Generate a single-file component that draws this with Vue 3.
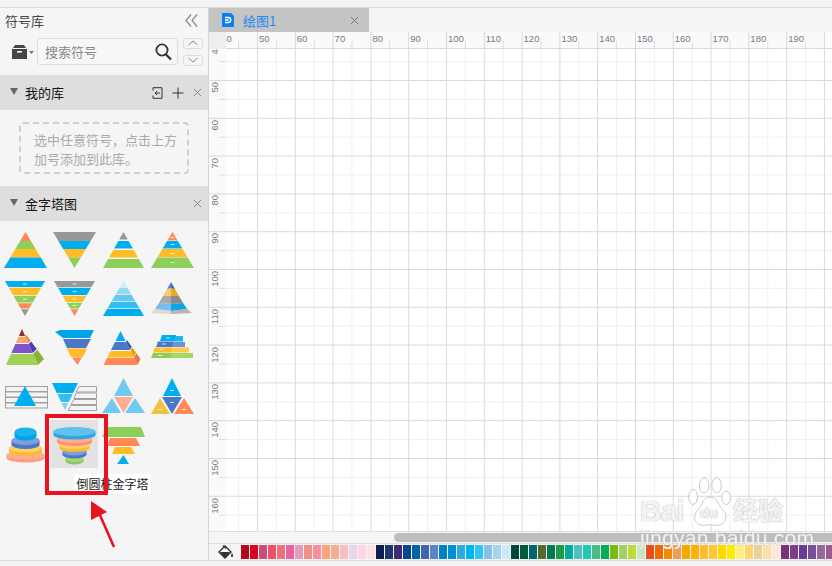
<script setup>
const topLabels = Array.from({ length: 16 }, (_, i) => 40 + i * 10)
const leftLabels = Array.from({ length: 13 }, (_, i) => 40 + i * 10)

const swatches = [
  '#b10a1a','#d6061d','#c8507c','#ea5468','#ef7078','#e763a0','#e59ab9','#f29088','#f490a0','#ffa27a','#f3ad97','#f7bfbb','#e8d5e8','#fdd4e3','#fde0e6',
  '#0e2050','#1e3770','#3e2c76','#07468f','#0064a4','#3f63ae','#5585c4','#0081cc','#0090cf','#2eaae1','#00b4ee','#2cc5f6','#88bfe8','#a0d7ef','#cbe9f4',
  '#00463a','#005a3c','#00686a','#566a2e','#007a4e','#1e9a49','#00ad9c','#50bcc4','#1dcdb0','#49bb84','#00ae55','#7db713','#a5cf63','#bedb3e','#cce6c4',
  '#e6501e','#ef6a00','#f38a00','#f59a55','#f4a900','#ffb000','#ffba30','#ffc82a','#ffd800','#ffe900','#fdf080','#ffd46a','#ead09a','#ffdfa8','#fde9d5',
  '#7a3277','#7f3c88','#663c98','#745099','#96689e','#a05a8c'
]

const B = '#00aeef', G = '#8cd05a', Y = '#ffbc25', O = '#ff8a58', GR = '#989898', IN = '#4a78c8'

const poly = (pts, f, extra = {}) => ({ tag: 'polygon', attrs: { points: pts.map(p => p.join(',')).join(' '), fill: f, ...extra } })
const rect = (x, y, width, height, f, extra = {}) => ({ tag: 'rect', attrs: { x, y, width, height, fill: f, ...extra } })
const ell = (cx, cy, rx, ry, f) => ({ tag: 'ellipse', attrs: { cx, cy, rx, ry, fill: f } })

// Horizontal slices of a triangle whose apex is at (cx, ya) and whose wide edge is at yb.
const bands = (cx, ya, yb, hw, list) => list.map(([y0, y1, f]) => {
  const w = y => hw * Math.abs(y - ya) / Math.abs(yb - ya)
  return poly([[cx - w(y0), y0], [cx + w(y0), y0], [cx + w(y1), y1], [cx - w(y1), y1]], f)
})

// Same slices with a darker facet on the right, for the pseudo-3D pyramids.
const sides = (cx, ya, yb, hw, depth, lift, list) => list.map(([y0, y1, f]) => {
  const t = y => Math.abs(y - ya) / Math.abs(yb - ya)
  const xf = y => cx + hw * t(y)
  const xb = y => cx + (hw + depth) * t(y)
  return poly([[xf(y0), y0], [xf(y1), y1], [xb(y1), y1 - lift * t(y1)], [xb(y0), y0 - lift * t(y0)]], f)
})

const cyl = (cx, top, rx, ry, h, side, face) => [
  ell(cx, top + h, rx, ry, side),
  rect(cx - rx, top, rx * 2, h, side),
  ell(cx, top, rx, ry, face)
]

const marks = (list) => list.map(([x, y]) => rect(x - 2, y, 4, 1, '#ffffff', { opacity: 0.75 }))

const tableRows = (x, w, ys, h) => ys.map(y => rect(x, y, w, h, '#f4f4f4', { stroke: '#a0a0a0', 'stroke-width': 1 }))

const rowLine = { stroke: '#a0a0a0', 'stroke-width': 1 }

const icons = [
  bands(24.5, 8, 44, 21.5, [[8, 17, O], [17, 25, G], [25, 33.6, Y], [33.6, 44, B]]),
  bands(24.5, 44, 8, 21.5, [[8, 17, GR], [17, 25, B], [25, 33.6, Y], [33.6, 44, G]]),
  bands(24.5, 8, 44, 20.5, [[8, 15.5, GR], [17, 24.5, B], [26, 33.5, Y], [35, 44, G]]),
  [...bands(24.5, 8, 44, 21.5, [[8, 16.5, O], [17, 24.6, B], [25, 33, Y], [33.5, 44, G]]), ...marks([[24.5, 13], [24.5, 20], [24.5, 29], [24.5, 38]])],

  [...bands(24, 43, 8, 20, [[8, 14, B], [14.8, 22, Y], [22.8, 29.5, G], [30.2, 35.6, O], [36.2, 43, GR]]), ...marks([[24, 10.5], [24, 18], [24, 25.5]])],
  [...bands(24.5, 43, 8, 20.5, [[8, 14, GR], [14.8, 22, B], [22.8, 29, Y], [29.8, 35.6, G], [36.2, 43, O]]), ...marks([[24.5, 10.5], [24.5, 18], [24.5, 25.5], [24.5, 32]])],
  bands(24.5, 8, 43, 20.5, [[8, 14, '#cfeaf7'], [14.8, 21, '#97d8f3'], [21.8, 28, '#66c8f0'], [28.8, 35, '#33bdf0'], [35.8, 43, B]]),
  [
    poly([[23, 9], [19, 16], [23, 15.5]], '#5b86d0'), poly([[23, 9], [27, 16], [23, 15.5]], '#3f6bb8'),
    poly([[19, 16], [15, 23], [23, 23], [23, 15.5]], '#fcc96e'), poly([[27, 16], [31, 23], [23, 23], [23, 15.5]], '#e9ad25'),
    poly([[15, 23], [11, 30], [23, 31], [23, 23]], '#a9a9a9'), poly([[31, 23], [35, 30], [23, 31], [23, 23]], '#8a8a8a'),
    poly([[11, 30], [7, 36], [23, 38], [23, 31]], '#77bdf0'), poly([[35, 30], [39, 36], [23, 38], [23, 31]], '#0aa6e6'),
    poly([[7, 36], [3, 40], [23, 41], [23, 38]], '#ded8d2'), poly([[39, 36], [44, 40], [23, 41], [23, 38]], '#bab4ae')
  ],

  [
    ...sides(21, 7, 43, 16, 6, 6, [[14, 21, '#e88a3c'], [22, 31, '#5c34b4'], [32, 43, '#87b52e']]),
    ...bands(21, 7, 43, 16, [[7, 14, '#8c2f39'], [14.8, 21, '#f5a86a'], [22, 31, '#7d55c7'], [32, 43, '#a2d055']])
  ],
  [
    poly([[5, 10], [10, 8], [44, 8], [40, 16], [13, 16]], '#00a5e6'),
    poly([[13, 17], [41, 17], [36, 26], [17, 26]], IN),
    poly([[17, 26.5], [37, 26.5], [33, 35], [21, 35]], Y),
    poly([[22, 35.5], [32, 35.5], [27.5, 43]], O)
  ],
  [
    ...sides(21.5, 9, 43, 17, 3, 6, [[20, 28, '#2e59a8'], [29, 35.5, '#e8a400'], [36, 43, '#e87840']]),
    ...bands(21.5, 9, 43, 17, [[9, 19, B], [20, 28, IN], [29, 35.5, Y], [36, 43, O]])
  ],
  [
    rect(24, 14, 11, 5.5, '#1fb6f0'), rect(22, 20, 15, 5, '#6d94d8'), rect(22, 25.5, 19, 5, '#ffc94a'), rect(22, 31, 23, 5, '#a2d869'),
    poly([[14, 13], [28, 13], [26, 19], [12, 19]], B),
    poly([[10, 19.5], [25, 19.5], [24, 25], [8, 25]], IN),
    poly([[7, 25.5], [24, 25.5], [23, 30.5], [5, 30.5]], Y),
    poly([[5, 31], [24, 31], [22, 36], [3, 36]], G),
    ...marks([[20, 15.5], [16, 21.5], [14, 27], [12, 33]])
  ],

  [
    ...tableRows(4.5, 42, [15.5, 21, 26.5, 32], 5),
    ...bands(24, 15, 35, 11, [[15, 35, B]])
  ],
  [
    poly([[29, 15.5], [46.5, 15.5], [46.5, 21], [26, 21]], '#f4f4f4', rowLine),
    poly([[26, 22], [46.5, 22], [46.5, 27.5], [24, 27.5]], '#f4f4f4', rowLine),
    poly([[24, 28.5], [46.5, 28.5], [46.5, 33.5], [21, 33.5]], '#f4f4f4', rowLine),
    poly([[21, 34.5], [46.5, 34.5], [46.5, 39.5], [18, 39.5]], '#f4f4f4', rowLine),
    ...bands(15, 39, 12, 13, [[12, 22, B], [23, 31, '#33bdf0'], [32, 39, '#7dd0f2']])
  ],
  [
    poly([[24.5, 7], [15, 25], [34, 25]], '#6ecbef'),
    poly([[15, 26], [34, 26], [24.5, 42]], '#ffae90'),
    poly([[13, 27], [3, 42], [22, 42]], '#6ecbef'),
    poly([[36, 27], [26, 42], [46, 42]], '#6ecbef')
  ],
  [
    poly([[24, 7], [15, 25], [33, 25]], B),
    poly([[14, 26], [34, 26], [24, 43]], IN),
    poly([[12, 27], [3, 43], [22, 43]], '#f0c040'),
    poly([[36, 27], [26, 43], [46, 43]], O),
    ...marks([[24, 19], [24, 31], [12, 38], [36, 38]])
  ],

  [
    ...cyl(24.5, 35, 19, 4.5, 3, '#ff9c7e', '#ffae93'),
    ...cyl(24.5, 28, 16.5, 4.5, 3.5, '#ffb92c', '#ffcf6a'),
    ...cyl(24.5, 20.5, 14, 4.5, 4, '#4a78c8', '#7e9fdc'),
    ...cyl(24.5, 12, 11, 4.5, 4, '#00a5e6', '#1bb4ee')
  ],
  [
    ...cyl(24.5, 38.5, 9, 3.5, 2.5, '#8cc85a', '#a6d879'),
    ...cyl(24.5, 31.5, 12, 4, 3, '#4a78c8', '#7e9fdc'),
    ...cyl(24.5, 25, 15, 4, 3, '#ffb92c', '#ffcf6a'),
    ...cyl(24.5, 19, 17.5, 4, 3, '#ff8f70', '#ffae93'),
    ...cyl(24.5, 11.5, 21, 4.5, 3.5, '#2aa8e6', '#60c0ee')
  ],
  [
    poly([[8, 7], [42, 7], [46, 17], [3, 17]], G),
    poly([[11, 18], [37, 18], [41, 26], [8, 26]], O),
    poly([[16, 27], [32, 27], [36, 34], [13, 34]], Y),
    poly([[24.5, 35], [18, 44], [30, 44]], B)
  ]
]
</script>

<template>
  <div class="app">
    <div class="topstrip"></div>
    <div class="main">
      <aside class="sidebar">
        <div class="title-row">
          <span>符号库</span>
          <svg class="collapse" width="13" height="13" viewBox="0 0 13 13">
            <path d="M6 0.5 L1 6.5 L6 12.5 M12 0.5 L7 6.5 L12 12.5" fill="none" stroke="#888" stroke-width="1.2" />
          </svg>
        </div>
        <div class="search-row">
          <div class="lib-btn">
            <svg width="22" height="16" viewBox="0 0 22 16">
              <path d="M3 1 H12 L14 4 H1 Z" fill="#444" />
              <path d="M0 5 H15 V15 H0 Z" fill="#444" />
              <rect x="5" y="7" width="5" height="1.6" fill="#f5f5f5" />
              <path d="M17 7 H22 L19.5 10 Z" fill="#777" />
            </svg>
          </div>
          <div class="search-box">
            <span>搜索符号</span>
            <svg width="17" height="18" viewBox="0 0 17 18">
              <circle cx="7" cy="7" r="5.6" fill="none" stroke="#333" stroke-width="1.8" />
              <path d="M11 11.4 L16 16.6" stroke="#333" stroke-width="2.2" />
            </svg>
          </div>
          <div class="spin">
            <div class="spin-btn">
              <svg width="10" height="6" viewBox="0 0 10 6"><path d="M0.5 5 L5 1 L9.5 5" fill="none" stroke="#888" /></svg>
            </div>
            <div class="spin-btn">
              <svg width="10" height="6" viewBox="0 0 10 6"><path d="M0.5 1 L5 5 L9.5 1" fill="none" stroke="#888" /></svg>
            </div>
          </div>
        </div>

        <div class="sec-head first">
          <i class="caret"></i>
          <span class="sec-name">我的库</span>
          <svg class="sec-tool" width="11" height="12" viewBox="0 0 11 12">
            <path d="M1 3.5 V0.7 H10 V11.3 H1 V8.5" fill="none" stroke="#333" />
            <path d="M8 6 H3 M5 4 L3 6 L5 8" fill="none" stroke="#333" />
          </svg>
          <svg class="sec-plus" width="12" height="12" viewBox="0 0 12 12">
            <path d="M6 0.5 V11.5 M0.5 6 H11.5" stroke="#333" />
          </svg>
          <svg class="sec-x" width="9" height="9" viewBox="0 0 9 9">
            <path d="M1 1 L8 8 M8 1 L1 8" stroke="#888" />
          </svg>
        </div>
        <div class="empty-box">选中任意符号，点击上方加号添加到此库。</div>

        <div class="sec-head">
          <i class="caret"></i>
          <span class="sec-name">金字塔图</span>
          <svg class="sec-x" width="9" height="9" viewBox="0 0 9 9">
            <path d="M1 1 L8 8 M8 1 L1 8" stroke="#888" />
          </svg>
        </div>

        <div class="thumbs">
          <div v-for="(shapes, i) in icons" :key="i" class="thumb" :class="{ active: i === 17 }">
            <svg width="49" height="48" viewBox="0 0 49 48">
              <component :is="s.tag" v-for="(s, j) in shapes" :key="j" v-bind="s.attrs" />
            </svg>
          </div>
        </div>

        <div class="tooltip">倒圆柱金字塔</div>
        <div class="red-box"></div>
        <svg class="arrow" width="40" height="60" viewBox="0 0 40 60">
          <path d="M1 1 L1 20 L17 12 Z" fill="#e8131f" />
          <path d="M9 13 L24 47" stroke="#e8131f" stroke-width="2.6" fill="none" />
        </svg>
      </aside>

      <section class="work">
        <div class="tabs">
          <div class="tab">
            <svg width="12" height="14" viewBox="0 0 12 14">
              <path d="M0 0 H9 L12 3 V14 H0 Z" fill="#0d7ff2" />
              <path d="M3 4.5 H6.2 A2.5 2.5 0 0 1 6.2 9.5 H3 M3 7 H6.5" fill="none" stroke="#fff" stroke-width="1.3" />
            </svg>
            <span class="tab-name">绘图1</span>
            <svg class="tab-x" width="9" height="9" viewBox="0 0 9 9">
              <path d="M1 1 L8 8 M8 1 L1 8" stroke="#777" />
            </svg>
          </div>
        </div>

        <div class="board">
          <div class="corner"></div>
          <div class="ruler-top">
            <div class="ruler-top-in">
              <span v-for="n in topLabels" :key="n" class="rt">{{ n }}</span>
            </div>
          </div>
          <div class="ruler-left">
            <div class="ruler-left-in">
              <span v-for="n in leftLabels" :key="n" class="rl"><b>{{ n }}</b></span>
            </div>
          </div>
          <div class="canvas"></div>
        </div>

        <div class="scroll-row"><div class="scroll-thumb"></div></div>

        <div class="palette">
          <svg class="fill-ico" width="16" height="15" viewBox="0 0 16 15">
            <path d="M7 1 L13 7 L7 13 L1 7 Z" fill="#fff" stroke="#333" stroke-width="1.4" />
            <path d="M2 7 H12 L7 13 Z" fill="#333" />
            <path d="M5 0.5 L8 3.5" stroke="#333" stroke-width="1.2" />
            <path d="M14 8 C15.5 10.5 15.5 12 14 12 C12.7 12 12.7 10.5 14 8 Z" fill="#333" />
          </svg>
          <div class="swatches">
            <i v-for="(c, i) in swatches" :key="i" class="sw" :style="{ background: c }"></i>
          </div>
        </div>

        <div class="wm">
          <svg class="wm-paw" width="44" height="50" viewBox="0 0 60 60" preserveAspectRatio="none">
            <g fill="#ffffff" fill-opacity="0.75" stroke="#c4c4c4" stroke-width="1.2">
              <ellipse cx="7" cy="24" rx="6" ry="9" />
              <ellipse cx="22" cy="10" rx="6.5" ry="9" />
              <ellipse cx="39" cy="10" rx="6.5" ry="9" />
              <ellipse cx="52" cy="25" rx="6" ry="8" />
              <path d="M30 24 C40 24 42 35 48 40 C56 47 50 59 38 58 C32 57 27 57 22 58 C10 59 5 48 13 40 C19 35 20 24 30 24 Z" />
            </g>
          </svg>
          <span class="wm-bai">Bai</span>
          <span class="wm-du">du</span>
          <span class="wm-jy">经验</span>
          <span class="wm-url">jingyan.baidu.com</span>
        </div>
      </section>
    </div>
    <div class="status"></div>
  </div>
</template>

<style>
html, body { margin: 0; padding: 0; background: #f5f5f5; }
</style>

<style scoped>
.app {
  width: 832px;
  height: 566px;
  overflow: hidden;
  display: flex;
  flex-direction: column;
  background: #f5f5f5;
  font-family: "Noto Sans CJK SC", "Liberation Sans", sans-serif;
  font-size: 13px;
}
.topstrip { height: 7px; border-bottom: 1px solid #d9d9d9; flex: none; }
.main { flex: 1; display: flex; min-height: 0; }
.status { height: 5px; flex: none; border-top: 1px solid #dedede; background: #f4f4f4; }

.sidebar {
  position: relative;
  width: 208px;
  flex: none;
  border-right: 1px solid #d4d4d4;
  background: #f5f5f5;
}
.title-row {
  height: 30px;
  display: flex;
  align-items: center;
  justify-content: space-between;
  padding: 0 10px 6px 5px;
  box-sizing: border-box;
  color: #444;
  line-height: 1;
}
.search-row { height: 27px; display: flex; align-items: center; }
.lib-btn { width: 37px; padding-left: 12px; box-sizing: border-box; display: flex; }
.search-box {
  width: 141px;
  height: 27px;
  box-sizing: border-box;
  border: 1px solid #dcdcdc;
  border-radius: 3px;
  display: flex;
  align-items: center;
  justify-content: space-between;
  padding: 0 5px 0 7px;
  color: #888;
  background: #f7f7f7;
}
.spin { margin-left: 5px; display: flex; flex-direction: column; gap: 6px; }
.spin-btn {
  width: 20px;
  height: 11px;
  box-sizing: border-box;
  border: 1px solid #dcdcdc;
  border-radius: 3px;
  display: flex;
  align-items: center;
  justify-content: center;
}

.sec-head {
  height: 35px;
  background: #dedede;
  display: flex;
  align-items: center;
  color: #111;
  padding-left: 10px;
  position: relative;
}
.sec-head.first { margin-top: 10px; }
.caret {
  width: 0;
  height: 0;
  border-left: 4.5px solid transparent;
  border-right: 4.5px solid transparent;
  border-top: 7px solid #666;
  margin-top: -3px;
}
.sec-name { margin-left: 7px; }
.sec-tool { position: absolute; left: 152px; top: 12px; }
.sec-plus { position: absolute; left: 172px; top: 12px; }
.sec-x { position: absolute; left: 193px; top: 13px; }

.empty-box {
  margin: 12px 19px 12px 19px;
  height: 52px;
  box-sizing: border-box;
  border: 2px dashed #cfcfcf;
  border-radius: 4px;
  padding: 6px 8px 0 13px;
  color: #aaa;
  line-height: 19px;
}

.thumbs {
  margin-top: 3px;
  padding-left: 1px;
  display: grid;
  grid-template-columns: repeat(4, 49px);
  grid-auto-rows: 49px;
}
.thumb { width: 48px; height: 48px; overflow: hidden; }
.thumb svg { display: block; }
.thumb.active { background: #e2e2e2; }

.tooltip {
  position: absolute;
  left: 74px;
  top: 466px;
  width: 77px;
  height: 20px;
  background: #fff;
  border-radius: 2px;
  color: #222;
  font-size: 12px;
  line-height: 20px;
  text-align: center;
}
.red-box {
  position: absolute;
  left: 45px;
  top: 406px;
  width: 63px;
  height: 81px;
  box-sizing: border-box;
  border: 4px solid #e8131f;
}
.arrow { position: absolute; left: 90px; top: 492px; }

.work { flex: 1; min-width: 0; display: flex; flex-direction: column; position: relative; }
.tabs { height: 24px; flex: none; display: flex; }
.tab {
  width: 160px;
  background: #c4c4c4;
  display: flex;
  align-items: center;
  padding-left: 13px;
  box-sizing: border-box;
  position: relative;
}
.tab-name { margin-left: 9px; color: #1e88f0; font-size: 13px; line-height: 1; }
.tab-x { position: absolute; left: 141px; top: 8px; }

.board {
  flex: 1;
  min-height: 0;
  display: grid;
  grid-template-columns: 17px 1fr;
  grid-template-rows: 17px 1fr;
  border-bottom: 1px solid #dedede;
  font-family: "Liberation Sans", sans-serif;
  font-size: 9.5px;
  color: #7a7886;
}
.corner { background: #eeeeee; }
.ruler-top {
  overflow: hidden;
  border-bottom: 1px solid #dadada;
  box-sizing: border-box;
  background-color: #fafafa;
  background-image:
    linear-gradient(to right, #d8d8d8 1px, transparent 1px),
    linear-gradient(to right, #dcdcdc 1px, transparent 1px);
  background-size: 37.8px 100%, 37.8px 7px;
  background-position: 31px 0, 12.1px 100%;
  background-repeat: repeat-x;
}
.ruler-top-in { display: flex; margin-left: -6.8px; }
.rt { flex: 0 0 37.8px; padding: 1px 0 0 2px; box-sizing: border-box; line-height: 11px; }
.ruler-left {
  overflow: hidden;
  background-color: #fafafa;
  background-image:
    linear-gradient(to bottom, #d8d8d8 1px, transparent 1px),
    linear-gradient(to bottom, #dcdcdc 1px, transparent 1px);
  background-size: 100% 37.8px, 7px 37.8px;
  background-position: 0 31px, 100% 12.1px;
  background-repeat: repeat-y;
}
.ruler-left-in { display: flex; flex-direction: column; margin-top: -6.8px; }
.rl { flex: 0 0 37.8px; height: 37.8px; padding: 2px 0 0 0; box-sizing: border-box; }
.rl b {
  display: block;
  font-weight: 400;
  writing-mode: vertical-rl;
  transform: rotate(180deg);
  line-height: 11px;
  width: 11px;
  text-align: right;
}
.canvas {
  background-color: #fff;
  background-image:
    linear-gradient(to right, #d9d9d9 1px, transparent 1px),
    linear-gradient(to bottom, #d9d9d9 1px, transparent 1px),
    linear-gradient(to right, #f0f0f0 1px, transparent 1px),
    linear-gradient(to bottom, #f0f0f0 1px, transparent 1px);
  background-size: 37.8px 37.8px;
  background-position: 31px 0, 0 31px, 12.1px 0, 0 12.1px;
}

.wm { position: absolute; left: 0; top: 0; width: 100%; height: 100%; pointer-events: none; overflow: hidden; }
.wm-paw { position: absolute; left: 479px; top: 469px; }
.wm-bai, .wm-du, .wm-jy, .wm-url {
  position: absolute;
  color: rgba(255, 255, 255, 0.85);
  text-shadow: 0 0 1px #b8b8b8, 0 0 1px #b8b8b8;
  line-height: 1;
  white-space: nowrap;
}
.wm-bai { left: 431px; top: 488px; font-size: 30px; font-weight: 700; font-family: "Liberation Sans", sans-serif; letter-spacing: -1px; }
.wm-du { left: 491px; top: 497px; font-size: 15px; font-weight: 700; font-family: "Liberation Sans", sans-serif; }
.wm-jy { left: 524px; top: 489px; font-size: 25px; font-weight: 700; font-family: "Noto Sans CJK SC", sans-serif; }
.wm-url { left: 431px; top: 519px; font-size: 21px; font-family: "Liberation Sans", sans-serif; letter-spacing: 0.3px; }

.scroll-row {
  height: 12px;
  flex: none;
  box-sizing: border-box;
  border-bottom: 1px solid #dedede;
  padding: 1px 0 1px 185px;
}
.scroll-thumb { height: 9px; background: #bdbdbd; border-radius: 5px 0 0 5px; }

.palette { height: 16px; flex: none; display: flex; align-items: center; overflow: hidden; position: relative; }
.fill-ico { margin-left: 9px; flex: none; }
.swatches { display: flex; gap: 1px; margin-left: 7px; flex: none; }
.sw { display: block; width: 8px; height: 14px; flex: none; }
</style>
